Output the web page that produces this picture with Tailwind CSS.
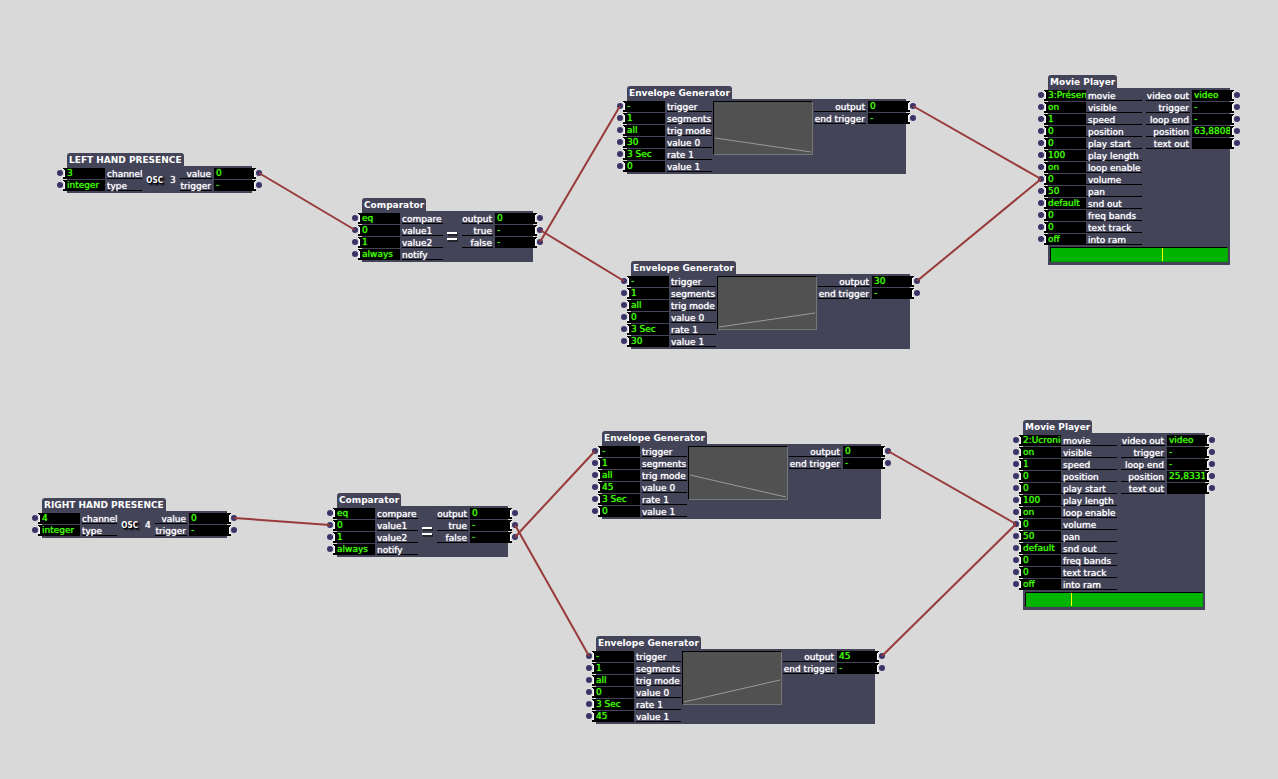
<!DOCTYPE html>
<html lang="en">
<head>
<meta charset="utf-8">
<meta name="viewport" content="width=device-width, initial-scale=1">
<title>Hand presence patch</title>
<script src="https://cdn.jsdelivr.net/npm/@tailwindcss/browser@4"></script>
</head>
<body class="bg-[#d9d9d9]">
<main id="patch" class="relative min-h-screen w-full overflow-hidden font-['DejaVu_Sans',Verdana,sans-serif] text-[9px] text-white"></main>

<script>
// Actor kinds: body width, label widths, inputs and outputs.
const kinds = {
  osc: {
    width: 'w-[185px]', inLabel: 'w-[35px] ml-[2px]', outLabel: 'w-[32px]',
    inputs: ['channel', 'type'], outputs: ['value', 'trigger'],
  },
  comparator: {
    width: 'w-[171px]', inLabel: 'w-[41px] ml-[2px]', outLabel: 'w-[31px]',
    inputs: ['compare', 'value1', 'value2', 'notify'], outputs: ['output', 'true', 'false'],
  },
  envelope: {
    width: 'w-[279px]', inLabel: 'w-[45px] ml-[2px]', outLabel: 'w-[52px]',
    inputs: ['trigger', 'segments', 'trig mode', 'value 0', 'rate 1', 'value 1'], outputs: ['output', 'end trigger'],
  },
  movie: {
    width: 'w-[182px]', inLabel: 'w-[56px] pl-[2px]', outLabel: 'w-[44px]',
    inputs: ['movie', 'visible', 'speed', 'position', 'play start', 'play length', 'loop enable', 'volume', 'pan', 'snd out', 'freq bands', 'text track', 'into ram'],
    outputs: ['video out', 'trigger', 'loop end', 'position', 'text out'],
  },
};

const actors = [
  { kind: 'osc', x: 67, y: 153, title: 'LEFT HAND PRESENCE', ins: ['3', 'integer'], outs: ['0', '-'], port: '3' },
  { kind: 'comparator', x: 362, y: 198, title: 'Comparator', ins: ['eq', '0', '1', 'always'], outs: ['0', '-', '-'] },
  { kind: 'envelope', x: 627, y: 86, title: 'Envelope Generator', ins: ['-', '1', 'all', '30', '3 Sec', '0'], outs: ['0', '-'], from: 37, to: 51 },
  { kind: 'envelope', x: 631, y: 261, title: 'Envelope Generator', ins: ['-', '1', 'all', '0', '3 Sec', '30'], outs: ['30', '-'], from: 51, to: 37 },
  { kind: 'movie', x: 1048, y: 75, title: 'Movie Player', ins: ['3:Présence', 'on', '1', '0', '0', '100', 'on', '0', '50', 'default', '0', '0', 'off'], outs: ['video', '-', '-', '63,8808', ''], position: 63.4 },
  { kind: 'osc', x: 42, y: 498, title: 'RIGHT HAND PRESENCE', ins: ['4', 'integer'], outs: ['0', '-'], port: '4' },
  { kind: 'comparator', x: 337, y: 493, title: 'Comparator', ins: ['eq', '0', '1', 'always'], outs: ['0', '-', '-'] },
  { kind: 'envelope', x: 602, y: 431, title: 'Envelope Generator', ins: ['-', '1', 'all', '45', '3 Sec', '0'], outs: ['0', '-'], from: 29, to: 51 },
  { kind: 'envelope', x: 596, y: 636, title: 'Envelope Generator', ins: ['-', '1', 'all', '0', '3 Sec', '45'], outs: ['45', '-'], from: 51, to: 29 },
  { kind: 'movie', x: 1023, y: 420, title: 'Movie Player', ins: ['2:Ucronie', 'on', '1', '0', '0', '100', 'on', '0', '50', 'default', '0', '0', 'off'], outs: ['video', '-', '-', '25,8331', ''], position: 25.83 },
];

const wires = [
  [259, 173, 355, 230], [540, 230, 624, 281], [540, 242, 620, 106], [913, 106, 1041, 179], [917, 281, 1041, 179],
  [234, 518, 330, 525], [515, 525, 589, 656], [515, 537, 595, 451], [888, 451, 1016, 524], [882, 656, 1016, 524],
];

const dot = '<span class="mt-[2px] h-[6px] w-[6px] shrink-0 rounded-full bg-[#393468]"></span>';
const leftNotch = '<svg class="h-[11px] w-[4px] shrink-0" viewBox="0 0 4 11" shape-rendering="crispEdges"><path d="M0 0h4v11H0z"/><path fill="#d9d9d9" d="M0 1h1v8H0z"/><path fill="#fff" d="M0 1h1v1h1v7H0V8h1V2H0z"/></svg>';
const rightNotch = '<svg class="h-[11px] w-[4px] shrink-0" viewBox="0 0 4 11" shape-rendering="crispEdges"><path d="M0 0h4v11H0z"/><path fill="#d9d9d9" d="M3 1h1v8H3z"/><path fill="#fff" d="M4 1H3v1H2v7h2V8H3V2h1z"/></svg>';

function inputRow(name, value, id, labelClass) {
  return `<div class="flex h-[11px] items-start">${dot}${leftNotch}
    <input id="${id}" value="${value}" class="h-[11px] w-[38px] bg-black p-0 pb-px leading-[10px] text-[#40ff00] outline-none [text-shadow:0_0_1px_#40ff00]">
    <label for="${id}" class="h-[11px] whitespace-nowrap border-b border-black leading-[12px] [text-shadow:0_0_1px_#fff] ${labelClass}">${name}</label>
  </div>`;
}

function outputRow(name, value, id, labelClass) {
  return `<div class="flex h-[11px] items-start justify-end">
    <label for="${id}" class="mr-[2px] flex h-[11px] justify-end whitespace-nowrap border-b border-black pr-px leading-[12px] [text-shadow:0_0_1px_#fff] ${labelClass}">${name}</label>
    <output id="${id}" class="h-[11px] w-[38px] bg-black pl-[2px] leading-[10px] text-[#40ff00] [text-shadow:0_0_1px_#40ff00]">${value}</output>${rightNotch}${dot}
  </div>`;
}

function middle(a) {
  if (a.kind === 'osc') {
    return `<div class="flex flex-1 items-center justify-center gap-[7px] self-stretch pt-[2px]">
      <span class="font-['DejaVu_Sans_Condensed',sans-serif] text-[8px] font-bold [text-shadow:1px_1px_1px_#000,2px_2px_2px_#000]">OSC</span><span class="[text-shadow:0_0_1px_#fff]">${a.port}</span></div>`;
  }
  if (a.kind === 'comparator') {
    return `<div class="flex flex-1 justify-center pt-[18px]">
      <svg role="img" aria-label="equals" class="h-[13px] w-[13px]" viewBox="0 0 13 13"><path fill="#111" fill-opacity=".6" d="M2 2h10v3H2zM2 8h10v3H2z"/><path fill="#fff" d="M1 1h10v2H1zM1 7h10v2H1z"/></svg></div>`;
  }
  if (a.kind === 'envelope') {
    return `<svg role="img" aria-label="envelope" class="ml-px h-[54px] w-[100px] border border-t-black border-l-black border-r-[#777] border-b-[#777] bg-[#515151]" viewBox="0 0 98 52">
      <line x1="1" y1="${a.from - 1}" x2="97" y2="${a.to - 1}" stroke="#999" stroke-width="1"/></svg>`;
  }
  return '';
}

function actor(a, n) {
  const k = kinds[a.kind];
  const ins = k.inputs.map((name, i) => inputRow(name, a.ins[i], `a${n}-in${i}`, k.inLabel)).join('');
  const outs = k.outputs.map((name, i) => outputRow(name, a.outs[i], `a${n}-out${i}`, k.outLabel)).join('');
  const scrub = a.position === undefined ? '<div class="h-[2px]"></div>' : `<div class="px-[2px] pt-[2px] pb-[3px]">
    <input type="range" aria-label="position" min="0" max="100" step="any" value="${a.position}" class="block h-[15px] w-full appearance-none border border-t-black border-l-black border-r-[#00a000] border-b-[#00a000] bg-[#00b400] [&::-webkit-slider-thumb]:h-[13px] [&::-webkit-slider-thumb]:w-px [&::-webkit-slider-thumb]:appearance-none [&::-webkit-slider-thumb]:bg-[#ffff00]"></div>`;
  return `<section class="absolute ${k.width}" style="left:${a.x}px;top:${a.y}px">
    <h2 class="h-[13px] w-fit rounded-t-[3px] bg-[#444459] px-[2px] font-bold leading-[14px] whitespace-nowrap">${a.title}</h2>
    <div class="bg-[#444459] pt-[2px]">
      <div class="-mx-[10px] flex items-start">
        <div class="flex flex-col gap-px">${ins}</div>
        ${middle(a)}
        <div class="ml-auto flex flex-col gap-px">${outs}</div>
      </div>
      ${scrub}
    </div>
  </section>`;
}

document.getElementById('patch').innerHTML = actors.map(actor).join('') +
  `<svg class="pointer-events-none absolute inset-0 h-full w-full" fill="none" stroke="#983a3a" stroke-width="2">${
    wires.map(([x1, y1, x2, y2]) => `<line x1="${x1}" y1="${y1}" x2="${x2}" y2="${y2}"/>`).join('')}</svg>`;
</script>
</body>
</html>
